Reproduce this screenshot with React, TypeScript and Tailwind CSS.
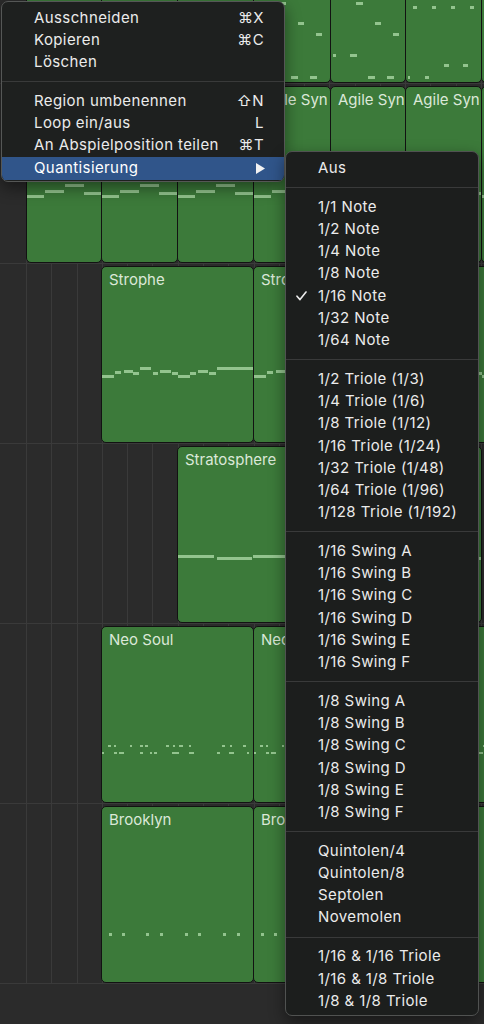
import React from 'react';

type Note = [number, number, number];

const COLS = [26, 101, 177, 253, 330, 405, 481, 557];

const patA: Note[] = [[25, 96, 7], [44, 116, 6], [62, 127, 6], [2, 148, 3], [19, 148, 7], [37, 170, 7], [56, 170, 7]];
const patB: Note[] = [[7, 100, 4], [26, 100, 4], [45, 100, 4], [64, 100, 4], [38, 158, 5], [57, 158, 5], [2, 170, 2], [19, 170, 4]];
const agile: Note[] = [[38, 98, 19], [18, 104, 19], [57, 106, 18], [0, 109, 17]];
const strophe: Note[] = [
  [0, 109, 12], [13, 105, 6], [22, 104, 9], [31, 106, 6], [38, 101, 11], [51, 106, 5], [58, 104, 11],
  [70, 106, 6], [76, 109, 12], [88, 106, 6], [96, 104, 10], [107, 106, 7], [115, 101, 37],
];
const strato: Note[] = [[0, 109, 36], [39, 111, 35], [75, 109, 40], [118, 111, 34]];
const neo: Note[] = [
  [6, 119, 3], [12, 119, 2], [28, 119, 2], [38, 119, 3], [43, 119, 3], [64, 119, 3], [71, 119, 2], [77, 119, 4],
  [87, 119, 2], [120, 119, 3], [128, 119, 2], [141, 119, 3],
  [0, 126, 2], [12, 126, 3], [17, 126, 5], [38, 126, 3], [48, 126, 2], [52, 126, 3], [70, 126, 7], [87, 126, 5],
  [115, 126, 3], [127, 126, 5], [145, 126, 2], [151, 126, 2],
];
const brooklyn: Note[] = [[7, 127, 3], [20, 127, 3], [44, 127, 3], [58, 127, 3], [83, 127, 3], [96, 127, 3], [121, 127, 3], [135, 127, 3]];

type Region = { from: number; to: number; label?: string; notes: Note[]; noteH?: number };

const rows: Region[][] = [
  [0, 1, 2, 3, 4, 5, 6].map((i) => ({ from: i, to: i + 1, notes: i === 5 ? patB : patA })),
  [0, 1, 2, 3, 4, 5, 6].map((i) => ({ from: i, to: i + 1, label: 'Agile Syn', notes: agile })),
  [
    { from: 1, to: 3, label: 'Strophe', notes: strophe },
    { from: 3, to: 5, label: 'Strophe', notes: strophe },
    { from: 5, to: 7, label: 'Strophe', notes: strophe },
  ],
  [
    { from: 2, to: 4, label: 'Stratosphere', notes: strato },
    { from: 4, to: 6, label: 'Stratosphere', notes: strato },
  ],
  [
    { from: 1, to: 3, label: 'Neo Soul', notes: neo, noteH: 2 },
    { from: 3, to: 5, label: 'Neo Soul', notes: neo, noteH: 2 },
    { from: 5, to: 7, label: 'Neo Soul', notes: neo, noteH: 2 },
  ],
  [
    { from: 1, to: 3, label: 'Brooklyn', notes: brooklyn },
    { from: 3, to: 5, label: 'Brooklyn', notes: brooklyn },
    { from: 5, to: 7, label: 'Brooklyn', notes: brooklyn },
  ],
];

function RegionBox({ r }: { r: Region }) {
  const left = COLS[r.from];
  const width = COLS[r.to] - left + 1;
  return (
    <div
      className="absolute top-[2px] h-[177px] rounded-[5px] border border-[#121212] bg-[#3c7a3a] overflow-hidden"
      style={{ left, width }}
    >
      <svg className="absolute inset-0" width={width} height={177}>
        {r.notes.map(([x, y, w], i) => (
          <rect key={i} x={x} y={y - 1} width={w} height={r.noteH ?? 3} fill="#93c48e" />
        ))}
      </svg>
      {r.label && (
        <div className="relative pl-[7px] pt-[3px] text-[15px] leading-[20px] text-[#dbe8d8] whitespace-nowrap overflow-hidden">
          {r.label}
        </div>
      )}
    </div>
  );
}

const gridXs = Array.from({ length: 19 }, (_, i) => Math.round(26 + i * 25.28));

type Item = { label: string; checked?: boolean };

const subGroups: Item[][] = [
  [{ label: 'Aus' }],
  ['1/1 Note', '1/2 Note', '1/4 Note', '1/8 Note', '1/16 Note', '1/32 Note', '1/64 Note'].map((l) => ({ label: l, checked: l === '1/16 Note' })),
  ['1/2 Triole (1/3)', '1/4 Triole (1/6)', '1/8 Triole (1/12)', '1/16 Triole (1/24)', '1/32 Triole (1/48)', '1/64 Triole (1/96)', '1/128 Triole (1/192)'].map((l) => ({ label: l })),
  ['A', 'B', 'C', 'D', 'E', 'F'].map((l) => ({ label: `1/16 Swing ${l}` })),
  ['A', 'B', 'C', 'D', 'E', 'F'].map((l) => ({ label: `1/8 Swing ${l}` })),
  ['Quintolen/4', 'Quintolen/8', 'Septolen', 'Novemolen'].map((l) => ({ label: l })),
  ['1/16 & 1/16 Triole', '1/16 & 1/8 Triole', '1/8 & 1/8 Triole'].map((l) => ({ label: l })),
];

function Sep({ h }: { h: string }) {
  return (
    <div className={`${h} flex items-center`}>
      <div className="h-px w-full bg-[#393a3a]" />
    </div>
  );
}

export default function App() {
  return (
    <div
      className="relative w-[484px] h-[1024px] overflow-hidden bg-[#2b2b2b]"
      style={{ fontFamily: 'Inter, "Noto Sans", sans-serif' }}
    >
      {/* grid lines */}
      <div className="absolute left-0 top-0 w-full h-[984px]">
        {gridXs.map((x) => (
          <div key={x} className="absolute top-0 bottom-0 w-px bg-[#3a3a3a]" style={{ left: x }} />
        ))}
      </div>

      {/* tracks */}
      <div className="relative mt-[-96px] flex flex-col">
        {rows.map((row, ri) => (
          <div key={ri} className="relative h-[180px] border-b border-[#3a3a3a]">
            {row.map((r, i) => (
              <RegionBox key={i} r={r} />
            ))}
          </div>
        ))}
      </div>

      {/* main context menu */}
      <div className="absolute left-[1px] top-[1px] w-[284px] h-[181px] rounded-[7px] border border-[#555756] bg-[#1e201f] pt-[5px] text-[15px] tracking-[0.4px] text-[#ebebeb] shadow-[0_6px_16px_rgba(0,0,0,0.45)] overflow-hidden">
        {[
          ['Ausschneiden', '⌘X'],
          ['Kopieren', '⌘C'],
          ['Löschen', ''],
        ].map(([l, k]) => (
          <div key={l} className="h-[22px] flex items-center justify-between pl-[32px] pr-[20px]">
            <span>{l}</span>
            <span>{k}</span>
          </div>
        ))}
        <Sep h="h-[17px]" />
        {[
          ['Region umbenennen', '⇧N'],
          ['Loop ein/aus', 'L'],
          ['An Abspielposition teilen', '⌘T'],
        ].map(([l, k]) => (
          <div key={l} className="h-[22px] flex items-center justify-between pl-[32px] pr-[20px]">
            <span>{l}</span>
            <span>{k}</span>
          </div>
        ))}
        <div className="mt-[1px] h-[23px] flex items-center justify-between pl-[32px] pr-[19px] bg-[#30558a] text-white">
          <span>Quantisierung</span>
          <svg width="9" height="11" viewBox="0 0 9 11">
            <polygon points="0,0 9,5.5 0,11" fill="#f2f2f2" />
          </svg>
        </div>
      </div>

      {/* submenu */}
      <div className="absolute left-[285px] top-[151px] w-[194px] h-[865px] rounded-[7px] border border-[#505251] bg-[#1c1e1d] pt-[5px] text-[15px] tracking-[0.4px] text-[#ebebeb] shadow-[0_6px_16px_rgba(0,0,0,0.45)]">
        {subGroups.map((g, gi) => (
          <div key={gi}>
            {gi > 0 && <Sep h="h-[16.8px]" />}
            {g.map((it) => (
              <div key={it.label} className="relative h-[22.2px] flex items-center pl-[32px]">
                {it.checked && (
                  <svg className="absolute left-[10px] top-[6px]" width="11" height="10" viewBox="0 0 11 10">
                    <path d="M1 5.2 L4 8.6 L10 1" fill="none" stroke="#ebebeb" strokeWidth="1.6" strokeLinecap="round" strokeLinejoin="round" />
                  </svg>
                )}
                <span className="whitespace-nowrap">{it.label}</span>
              </div>
            ))}
          </div>
        ))}
      </div>
    </div>
  );
}
